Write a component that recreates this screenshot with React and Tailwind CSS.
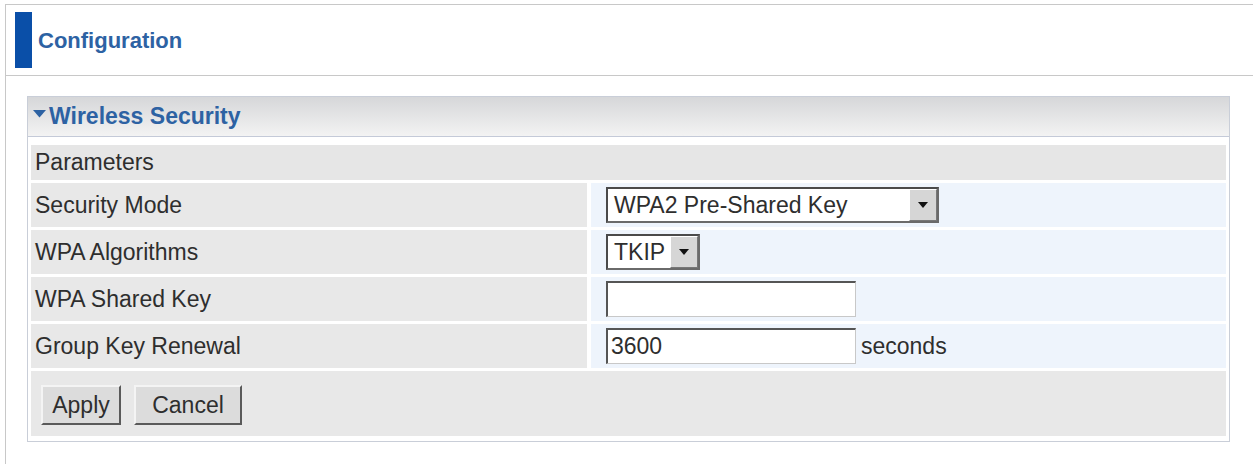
import React from 'react';

const font = { fontFamily: '"Liberation Sans", Arial, sans-serif' };

function SelectBox({ value, width }) {
  return (
    <div className={`flex h-[36px] ${width} border-2 border-t-[#4a4a4a] border-l-[#4a4a4a] border-b-[#6a6a6a] border-r-[#6a6a6a] bg-white`}>
      <div className="flex-1 flex items-center pl-[6px] text-[23px] text-[#2e2e2e]">{value}</div>
      <div className="w-[28px] flex items-center justify-center bg-[#d6d6d6] border border-t-white border-l-white border-b-[#777] border-r-[#777]">
        <svg width="12" height="7" viewBox="0 0 12 7"><path d="M1 0h10L6 6z" fill="#111" /></svg>
      </div>
    </div>
  );
}

function TextBox({ value }) {
  return (
    <div className="flex items-center h-[36px] w-[250px] bg-white border-t-2 border-l-2 border-b border-r border-t-[#555] border-l-[#555] border-b-[#c8c8c8] border-r-[#c8c8c8] pl-[3px] text-[23px] text-[#2e2e2e]">
      {value}
    </div>
  );
}

function Row({ label, children }) {
  return (
    <div className="flex gap-[4px] h-[44px]">
      <div className="w-[556px] bg-[#e8e8e8] flex items-center pl-[4px] text-[23px] text-[#2e2e2e]">{label}</div>
      <div className="flex-1 bg-[#eef4fc] flex items-center pl-[15px]">{children}</div>
    </div>
  );
}

function Btn({ children, w }) {
  return (
    <div className={`h-[40px] ${w} flex items-center justify-center bg-[#dcdcdc] border-2 border-t-[#f4f4f4] border-l-[#f4f4f4] border-b-[#5a5a5a] border-r-[#5a5a5a] text-[23px] text-[#2e2e2e]`}>
      {children}
    </div>
  );
}

export default function App() {
  return (
    <div className="w-[1253px] h-[464px] bg-white overflow-hidden pt-[4px] pl-[5px]" style={font}>
      <div className="border-t border-l border-[#c8c8c8] w-[1260px] h-[470px]">
        {/* page title */}
        <div className="h-[71px] flex items-center pl-[9px] border-b border-[#c8c8c8]">
          <div className="w-[17px] h-[56px] bg-[#0a4fa8]" />
          <span className="ml-[6px] text-[22px] font-bold text-[#2d62a3]">Configuration</span>
        </div>

        <div className="pt-[20px] pl-[21px]">
          <div className="w-[1203px] border border-[#c9ced8]">
            <div className="h-[40px] flex items-center pl-[5px] bg-gradient-to-b from-[#d6d7d9] to-[#f3f3f3] border-b border-[#c4cad8]">
              <svg width="13" height="8" viewBox="0 0 13 8" className="mr-[3px] mb-[6px]"><path d="M0 0h13L6.5 7.5z" fill="#2d62a3" /></svg>
              <span className="text-[23px] font-bold text-[#2d62a3]">Wireless Security</span>
            </div>

            <div className="px-[3px] pt-[8px] pb-[5px] flex flex-col gap-[3px]">
              <div className="h-[35px] bg-[#e6e6e6] flex items-center pl-[4px] text-[23px] text-[#2e2e2e]">Parameters</div>
              <Row label="Security Mode">
                <SelectBox value="WPA2 Pre-Shared Key" width="w-[333px]" />
              </Row>
              <Row label="WPA Algorithms">
                <SelectBox value="TKIP" width="w-[94px]" />
              </Row>
              <Row label="WPA Shared Key">
                <TextBox value="" />
              </Row>
              <Row label="Group Key Renewal">
                <TextBox value="3600" />
                <span className="ml-[5px] text-[23px] text-[#2e2e2e]">seconds</span>
              </Row>
              <div className="h-[65px] bg-[#e8e8e8] flex items-center gap-[13px] pl-[10px] pt-[3px]">
                <Btn w="w-[80px]">Apply</Btn>
                <Btn w="w-[108px]">Cancel</Btn>
              </div>
            </div>
          </div>
        </div>
      </div>
    </div>
  );
}
